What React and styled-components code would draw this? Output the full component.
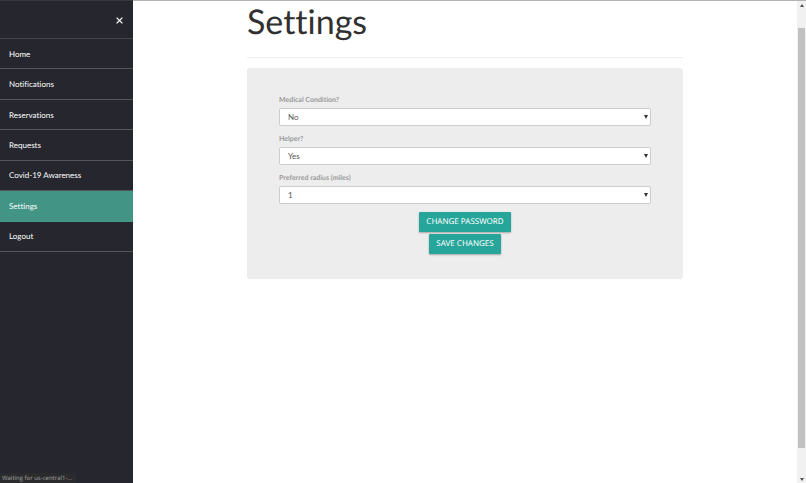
import React, { useState } from "react";
import styled, { createGlobalStyle } from "styled-components";

const GlobalStyle = createGlobalStyle`
  * {
    box-sizing: border-box;
  }

  body {
    margin: 0;
    background: #fff;
    font-family: Lato, "Liberation Sans", sans-serif;
    font-variant-ligatures: none;
    text-rendering: geometricPrecision;
  }
`;

const Page = styled.div`
  display: flex;
  min-height: 100vh;
  border-top: 1px solid #b3b3b3;
`;

const Sidebar = styled.aside`
  flex: 0 0 133px;
  margin-top: -1px;
  background: #25262e;
  border-top: 1px solid #36373d;
`;

const SidebarTop = styled.div`
  display: flex;
  justify-content: flex-end;
  padding: 13px 7px 11px 0;
`;

const CloseButton = styled.button`
  display: flex;
  padding: 3px;
  border: 0;
  background: none;
  color: #fff;
  cursor: pointer;
`;

const Menu = styled.nav`
  display: grid;
  grid-auto-rows: 1fr;
  min-height: 214px;
  border-top: 1px solid #45464c;
`;

const MenuLink = styled.a`
  display: flex;
  align-items: center;
  padding: 0 9px;
  border-bottom: 1px solid ${({ $active }) => ($active ? "#429585" : "#55565b")};
  background: ${({ $active }) => ($active ? "#429585" : "transparent")};
  color: #fff;
  font-size: 8px;
  line-height: 12px;
  text-decoration: none;
`;

const Main = styled.main`
  flex: 1;
  padding: 0 16px;
`;

const Container = styled.div`
  max-width: 436px;
  margin: 0 auto;
`;

const Title = styled.h1`
  margin: 0;
  padding-bottom: 14px;
  border-bottom: 1px solid #eee;
  color: #303030;
  font-size: 34px;
  font-weight: 400;
  line-height: 42px;
`;

const Panel = styled.form`
  margin-top: 10px;
  padding: 27px 32px 25px;
  border-radius: 3px;
  background: #ededed;
`;

const Field = styled.div`
  display: flex;
  flex-direction: column;
  gap: 3px;
  margin-bottom: 8px;
`;

const Label = styled.label`
  color: #999;
  font-size: 7px;
  font-weight: 700;
  line-height: 10px;
`;

const SelectWrap = styled.div`
  position: relative;
`;

const Select = styled.select`
  display: block;
  width: 100%;
  height: 18px;
  padding: 0 8px;
  border: 1px solid #ccc;
  border-radius: 2px;
  appearance: none;
  background: #fff;
  color: #555;
  font-family: inherit;
  font-size: 8px;
`;

const Arrow = styled.svg`
  position: absolute;
  top: 7px;
  right: 3px;
  pointer-events: none;
`;

const Actions = styled.div`
  display: flex;
  flex-direction: column;
  align-items: center;
  gap: 2px;
`;

const Button = styled.button`
  height: 20px;
  padding: 0 7px;
  border: 0;
  border-radius: 1px;
  background: #26a69a;
  box-shadow: 0 1px 2px rgba(0, 0, 0, 0.3);
  color: #fff;
  font-family: "Noto Sans", "Open Sans", sans-serif;
  font-size: 8px;
  line-height: 20px;
  text-rendering: inherit;
  text-transform: uppercase;
  cursor: pointer;
`;

const ScrollTrack = styled.div`
  display: flex;
  flex: 0 0 9px;
  flex-direction: column;
  align-items: center;
  justify-content: space-between;
  padding: 3px 0 2px;
  background: #f1f1f1;
`;

const ScrollThumb = styled.div`
  flex: 1;
  width: 7px;
  margin: 21px 0 30px;
  background: #c1c1c1;
`;

const Status = styled.div`
  position: fixed;
  bottom: 0;
  left: 0;
  padding: 0 2px;
  min-width: 76px;
  background: #2b2b2d;
  color: #a5a5a5;
  font-family: "Open Sans", "Noto Sans", sans-serif;
  font-size: 6px;
  line-height: 10px;
`;

const menuItems = [
  "Home",
  "Notifications",
  "Reservations",
  "Requests",
  "Covid-19 Awareness",
  "Settings",
  "Logout",
];

const SelectField = ({ id, label, value, options, onChange }) => {
  return (
    <Field>
      <Label htmlFor={id}>{label}</Label>
      <SelectWrap>
        <Select id={id} name={id} value={value} onChange={onChange}>
          {options.map((option) => (
            <option key={option}>{option}</option>
          ))}
        </Select>
        <Arrow width="4" height="4" viewBox="0 0 4 4" aria-hidden="true">
          <path d="M0 0h4L2 4z" fill="#333" />
        </Arrow>
      </SelectWrap>
    </Field>
  );
};

const App = () => {
  const [settings, setSettings] = useState({
    condition: "No",
    helper: "Yes",
    radius: "1",
  });

  const handleChange = (e) => {
    setSettings({ ...settings, [e.target.name]: e.target.value });
  };

  return (
    <>
      <GlobalStyle />
      <Page>
        <Sidebar>
          <SidebarTop>
            <CloseButton type="button" aria-label="Close menu">
              <svg width="7" height="7" viewBox="0 0 7 7">
                <path d="M0.6 0.6l5.8 5.8M6.4 0.6L0.6 6.4" stroke="currentColor" strokeWidth="1.3" />
              </svg>
            </CloseButton>
          </SidebarTop>
          <Menu>
            {menuItems.map((item) => (
              <MenuLink key={item} href="#" $active={item === "Settings"}>
                {item}
              </MenuLink>
            ))}
          </Menu>
        </Sidebar>
        <Main>
          <Container>
            <Title>Settings</Title>
            <Panel onSubmit={(e) => e.preventDefault()}>
              <SelectField
                id="condition"
                label="Medical Condition?"
                value={settings.condition}
                options={["No", "Yes"]}
                onChange={handleChange}
              />
              <SelectField
                id="helper"
                label="Helper?"
                value={settings.helper}
                options={["Yes", "No"]}
                onChange={handleChange}
              />
              <SelectField
                id="radius"
                label="Preferred radius (miles)"
                value={settings.radius}
                options={["1", "2", "5", "10"]}
                onChange={handleChange}
              />
              <Actions>
                <Button type="button">Change Password</Button>
                <Button type="submit">Save Changes</Button>
              </Actions>
            </Panel>
          </Container>
        </Main>
        <ScrollTrack aria-hidden="true">
          <svg width="4" height="3" viewBox="0 0 4 3">
            <path d="M2 0l2 3H0z" fill="#505050" />
          </svg>
          <ScrollThumb />
          <svg width="4" height="3" viewBox="0 0 4 3">
            <path d="M0 0h4L2 3z" fill="#505050" />
          </svg>
        </ScrollTrack>
      </Page>
      <Status>Waiting for us-central1-...</Status>
    </>
  );
};

export default App;
